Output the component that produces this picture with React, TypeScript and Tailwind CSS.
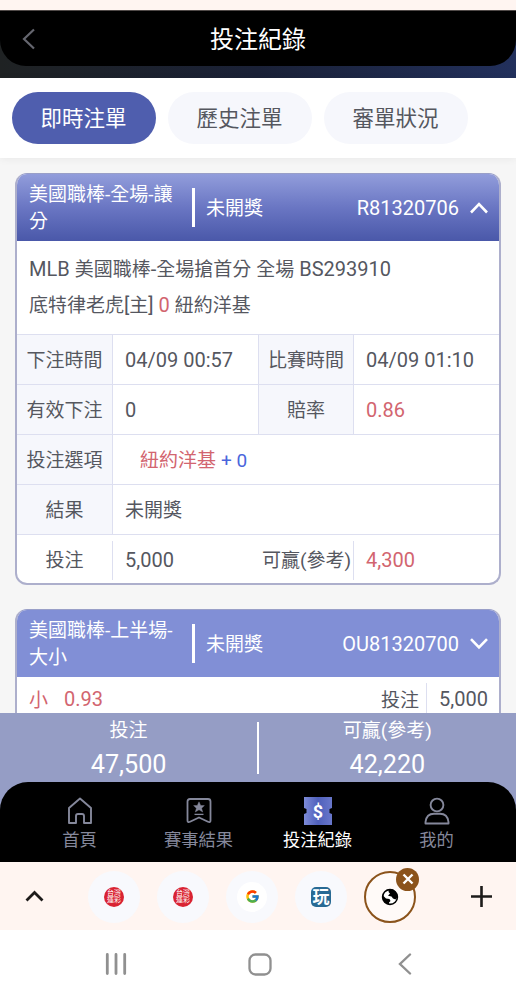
import type { ReactNode } from 'react';
import { FcGoogle } from 'react-icons/fc';

const tabs = ['即時注單', '歷史注單', '審單狀況'];

function Chevron({ up }: { up?: boolean }) {
  return (
    <svg width="18" height="12" viewBox="0 0 18 12" fill="none" stroke="white" strokeWidth="2.6">
      <path d={up ? 'M1 10.5 9 2.2 17 10.5' : 'M1 1.2 9 9.5 17 1.2'} />
    </svg>
  );
}

function Num({ children }: { children: ReactNode }) {
  return <span className="text-[20px]">{children}</span>;
}

interface CardHeaderProps {
  title: string;
  code: string;
  open?: boolean;
}

function CardHeader({ title, code, open }: CardHeaderProps) {
  return (
    <div
      className={`flex h-[67px] items-center pl-3 pr-[11px] text-white ${
        open ? 'bg-linear-to-b from-[#929ddb] via-[#6a76c3] to-[#4a58a9]' : 'bg-[#818fd6]'
      }`}
    >
      <div className="w-[150px] pt-px leading-[27.5px]">{title}</div>
      <div className="ml-[13px] h-[39px] w-[3px] bg-white" />
      <div className="ml-[11px] pt-[3px]">未開獎</div>
      <div className="ml-auto mr-[11px] text-[20px]">{code}</div>
      <Chevron up={open} />
    </div>
  );
}

function Label({ children }: { children: ReactNode }) {
  return (
    <div className="flex items-center justify-center border-r border-[#dddff0] bg-[#f6f7fc] pt-[4px]">
      {children}
    </div>
  );
}

function Value({ children, className = '' }: { children: ReactNode; className?: string }) {
  return <div className={`flex items-center pl-3 ${className}`}>{children}</div>;
}

function OpenCard() {
  return (
    <section className="h-[412px] overflow-hidden rounded-[12px] border-x-2 border-t border-b-2 border-[#adafcc] border-t-[#999fc8] bg-white">
      <CardHeader title="美國職棒-全場-讓分" code="R81320706" open />
      <div className="h-[93px] px-3 pt-[11px] leading-[34.5px]">
        <p>
          <Num>MLB </Num>美國職棒<Num>-</Num>全場搶首分<Num> </Num>全場<Num> BS293910</Num>
        </p>
        <p>
          底特律老虎<Num>[</Num>主<Num>] </Num>
          <span className="text-[20px] text-[#d2656f]">0</span>
          <Num> </Num>紐約洋基
        </p>
      </div>

      {/* 注單明細 */}
      <div className="divide-y divide-[#dddff0] border-t border-[#dddff0]">
        <div className="grid h-[50px] grid-cols-[96px_146px_95px_1fr]">
          <Label>下注時間</Label>
          <Value className="border-r border-[#dddff0]">
            <Num>04/09 00:57</Num>
          </Value>
          <Label>比賽時間</Label>
          <Value>
            <Num>04/09 01:10</Num>
          </Value>
        </div>
        <div className="grid h-[50px] grid-cols-[96px_146px_95px_1fr]">
          <Label>有效下注</Label>
          <Value className="border-r border-[#dddff0]">
            <Num>0</Num>
          </Value>
          <Label>賠率</Label>
          <Value className="text-[#d2656f]">
            <Num>0.86</Num>
          </Value>
        </div>
        <div className="grid h-[50px] grid-cols-[96px_1fr]">
          <Label>投注選項</Label>
          <div className="flex items-center gap-[5px] pt-[4px] pl-[27px] text-[#d2656f]">
            紐約洋基 <span className="text-[#4a66dc]">+ 0</span>
          </div>
        </div>
        <div className="grid h-[50px] grid-cols-[96px_1fr]">
          <Label>結果</Label>
          <Value className="pt-[4px]">未開獎</Value>
        </div>
        <div className="grid h-[50px] grid-cols-[96px_1fr_auto_146px] items-center">
          <div className="flex h-[39px] items-center justify-center border-r border-[#dddff0] pt-[3px]">
            投注
          </div>
          <Value>
            <Num>5,000</Num>
          </Value>
          <div className="pt-[3px] pr-[2px]">可贏(參考)</div>
          <div className="flex h-[39px] items-center border-l border-[#dddff0] pl-3 text-[#d2656f]">
            <Num>4,300</Num>
          </div>
        </div>
      </div>
    </section>
  );
}

function ClosedCard() {
  return (
    <section className="mt-[24px] h-[130px] overflow-hidden rounded-[12px] border-x-2 border-t border-b-2 border-[#adafcc] border-t-[#999fc8] bg-white">
      <CardHeader title="美國職棒-上半場-大小" code="OU81320700" />
      <div className="flex h-[44px] items-center pl-3 pr-[11px]">
        <span className="pt-[4px] text-[#d2656f]">小</span>
        <span className="ml-4 text-[20px] text-[#d2656f]">0.93</span>
        <span className="ml-auto pt-[4px] pr-[7px]">投注</span>
        <span className="flex h-[32px] items-center border-l border-[#dddff0] pl-3">
          <Num>5,000</Num>
        </span>
      </div>
    </section>
  );
}

function NavItem({ label, active, children }: { label: string; active?: boolean; children: ReactNode }) {
  return (
    <div
      className={`flex w-[119px] flex-col items-center text-[17.3px] leading-[26px] ${
        active ? 'text-white' : 'text-[#85889b]'
      }`}
    >
      <div className="mb-px flex h-[30px] items-center">{children}</div>
      {label}
    </div>
  );
}

function BottomNav() {
  return (
    <nav className="bg-[#959dc5]">
      <div className="flex h-[80px] justify-center rounded-t-[28px] bg-black pt-[14px]">
        <NavItem label="首頁">
          <svg width="26" height="28" viewBox="0 0 26 28" fill="none" stroke="currentColor" strokeWidth="1.9" strokeLinejoin="round">
            <path d="M2 11 13 1.500 24 11V26H17V19Q17 17 15 17H11Q9 17 9 19V26H2Z" />
          </svg>
        </NavItem>
        <NavItem label="賽事結果">
          <svg width="26" height="28" viewBox="0 0 26 28" fill="none" stroke="currentColor" strokeWidth="1.8" strokeLinejoin="round">
            <path d="M4 2H22Q24.500 2 24.500 4.500V23.500Q24.500 26 22 24.800L13 20.500 4 24.800Q1.500 26 1.500 23.500V4.500Q1.500 2 4 2Z" />
            <path d="M13 4.800 14.700 8.600H18.400L15.600 11.200 16.700 15 13 12.800 9.300 15 10.400 11.200 7.600 8.600H11.300Z" fill="currentColor" strokeWidth=".4" />
            <path d="M8.500 17.400H17.500" strokeWidth="1.300" />
          </svg>
        </NavItem>
        <NavItem label="投注紀錄" active>
          <svg width="30" height="30" viewBox="0 0 30 30">
            <defs>
              <linearGradient id="ticket" x1="0" y1="0" x2="1" y2="0">
                <stop offset="0" stopColor="#7d8bd8" />
                <stop offset=".5" stopColor="#4f60bb" />
                <stop offset="1" stopColor="#6977cb" />
              </linearGradient>
            </defs>
            <path d="M1 1H29V12L26.500 13V17L29 18V29H1V18L3.500 17V13L1 12Z" fill="url(#ticket)" />
            <text x="15" y="21.500" textAnchor="middle" fill="white" fontSize="18" fontWeight="700" fontFamily="Roboto, sans-serif">
              $
            </text>
          </svg>
        </NavItem>
        <NavItem label="我的">
          <svg width="26" height="28" viewBox="0 0 26 28" fill="none" stroke="currentColor" strokeWidth="1.9" strokeLinejoin="round">
            <circle cx="13" cy="8" r="6.400" />
            <path d="M1.500 26.500V25Q2.500 16.800 10 16.800H16Q23.500 16.800 24.500 25V26.500Z" />
          </svg>
        </NavItem>
      </div>
    </nav>
  );
}

function LotterySite() {
  return (
    <div className="flex size-[52px] items-center justify-center rounded-full bg-[#f8f9fd]">
      <div className="flex size-[20px] flex-col items-center justify-center rounded-full bg-[#d92332] text-[7px] leading-[6.500px] text-white">
        <span>台灣</span>
        <span>運彩</span>
      </div>
    </div>
  );
}

function BrowserBar() {
  return (
    <div className="flex h-[68px] items-center bg-[#fff5f1]">
      <svg className="ml-[25px]" width="19" height="12" viewBox="0 0 19 12" fill="none" stroke="#1d1b1a" strokeWidth="2.800">
        <path d="M1.500 10.500 9.500 2.500 17.500 10.500" />
      </svg>
      <div className="ml-[44px] flex gap-[17px] pt-px">
        <LotterySite />
        <LotterySite />
        <div className="flex size-[52px] items-center justify-center rounded-full bg-[#f8f9fd]">
          <div className="flex size-[30px] items-center justify-center rounded-full bg-white">
            <FcGoogle size={15} />
          </div>
        </div>
        <div className="flex size-[52px] items-center justify-center rounded-full bg-[#f8f9fd]">
          <div className="flex size-[20px] items-center justify-center rounded-[5px] bg-[#286a94] pb-[2px] font-['Noto_Sans_CJK_TC',sans-serif] text-[17px] leading-none font-bold text-white">
            玩
          </div>
        </div>
        <div className="relative flex size-[52px] items-center justify-center rounded-full border-[2.5px] border-[#8b531b] bg-[#fffaf8]">
          <svg width="18" height="18" viewBox="0 0 18 18">
            <circle cx="9" cy="9" r="7.400" fill="white" stroke="black" strokeWidth="1.600" />
            <path d="M8 1.500 11.500 1.500Q16.500 4 16.500 9L14.500 11.500 12 10.500 10.500 8.500 7 7.800 9 5.500 7.500 4Z" fill="black" />
            <path d="M1.500 7 5 10.500 8.500 11 9.500 13 8 14.500V16.500Q2 15.500 1.500 9Z" fill="black" />
          </svg>
          <div className="absolute -top-[5px] -right-[5px] flex size-[23px] items-center justify-center rounded-full bg-[#8b531b]">
            <svg width="12" height="12" viewBox="0 0 12 12" stroke="white" strokeWidth="2.400">
              <path d="M1.500 1.500 10.500 10.500M10.500 1.500 1.500 10.500" />
            </svg>
          </div>
        </div>
      </div>
      <svg className="mr-[24px] ml-auto" width="21" height="21" viewBox="0 0 21 21" stroke="#1d1b1a" strokeWidth="2.600">
        <path d="M10.500 0V21M0 10.500H21" />
      </svg>
    </div>
  );
}

function SystemNav() {
  return (
    <div className="flex h-[70px] items-center bg-white pr-[104px] pb-[2px] pl-[105px]">
      <svg width="22" height="22" viewBox="0 0 22 22" stroke="#909090" strokeWidth="2.800" strokeLinecap="round">
        <path d="M2.300 1.500V20.500M11 1.500V20.500M19.700 1.500V20.500" />
      </svg>
      <svg className="ml-[121px]" width="24" height="23" viewBox="0 0 24 23" fill="none" stroke="#909090" strokeWidth="2.300">
        <rect x="1.500" y="1.500" width="21" height="20" rx="6" />
      </svg>
      <svg className="ml-auto" width="14" height="22" viewBox="0 0 14 22" fill="none" stroke="#909090" strokeWidth="2.400" strokeLinecap="round">
        <path d="M12 1.500 2 11 12 20.500" />
      </svg>
    </div>
  );
}

export default function App() {
  return (
    <div className="flex h-[1000px] w-[516px] flex-col overflow-hidden bg-[#f6f6f6] font-[Roboto,'Noto_Sans_CJK_TC',sans-serif] text-[19px] text-[#55575f]">
      <div className="h-[10px] bg-[#fff5f1]" />

      <header className="h-[68px] border-t border-[#504a48] bg-linear-to-r from-[#1f2223] via-[#1a2137] to-[#22305c]">
        <div className="flex h-[55px] items-center rounded-b-[26px] bg-black">
          <svg className="ml-[22px]" width="14" height="22" viewBox="0 0 14 22" fill="none" stroke="#65666f" strokeWidth="2.200">
            <path d="M12 1.500 2 11 12 20.500" />
          </svg>
          <h1 className="flex-1 pt-[2px] pr-[36px] text-center text-[24px] text-white">投注紀錄</h1>
        </div>
      </header>

      <div className="z-10 flex h-[80px] gap-[12px] bg-white pt-[14px] pl-[12px] text-[21.5px] shadow-[0_1px_8px_rgba(0,0,0,0.06)]">
        {tabs.map((tab, i) => (
          <button
            key={tab}
            className={`h-[52px] w-[144px] rounded-full pt-[2px] pr-px ${
              i === 0 ? 'bg-[#4f5eae] text-white' : 'bg-[#f6f7fc]'
            }`}
          >
            {tab}
          </button>
        ))}
      </div>

      <main className="h-[555px] overflow-hidden pt-[15px] pr-[15px] pl-[15px]">
        <OpenCard />
        <ClosedCard />
      </main>

      {/* 總計 */}
      <div className="flex h-[69px] items-start bg-[#959dc5] text-center text-white">
        <div className="flex-1 pt-[4px]">
          <div className="leading-[28px]">投注</div>
          <div className="text-[25.200px] leading-[40px]">47,500</div>
        </div>
        <div className="mt-[9px] h-[52px] w-[1.5px] bg-white" />
        <div className="flex-1 pt-[4px]">
          <div className="leading-[28px]">可贏(參考)</div>
          <div className="text-[25.200px] leading-[40px]">42,220</div>
        </div>
      </div>

      <BottomNav />
      <BrowserBar />
      <SystemNav />
    </div>
  );
}
